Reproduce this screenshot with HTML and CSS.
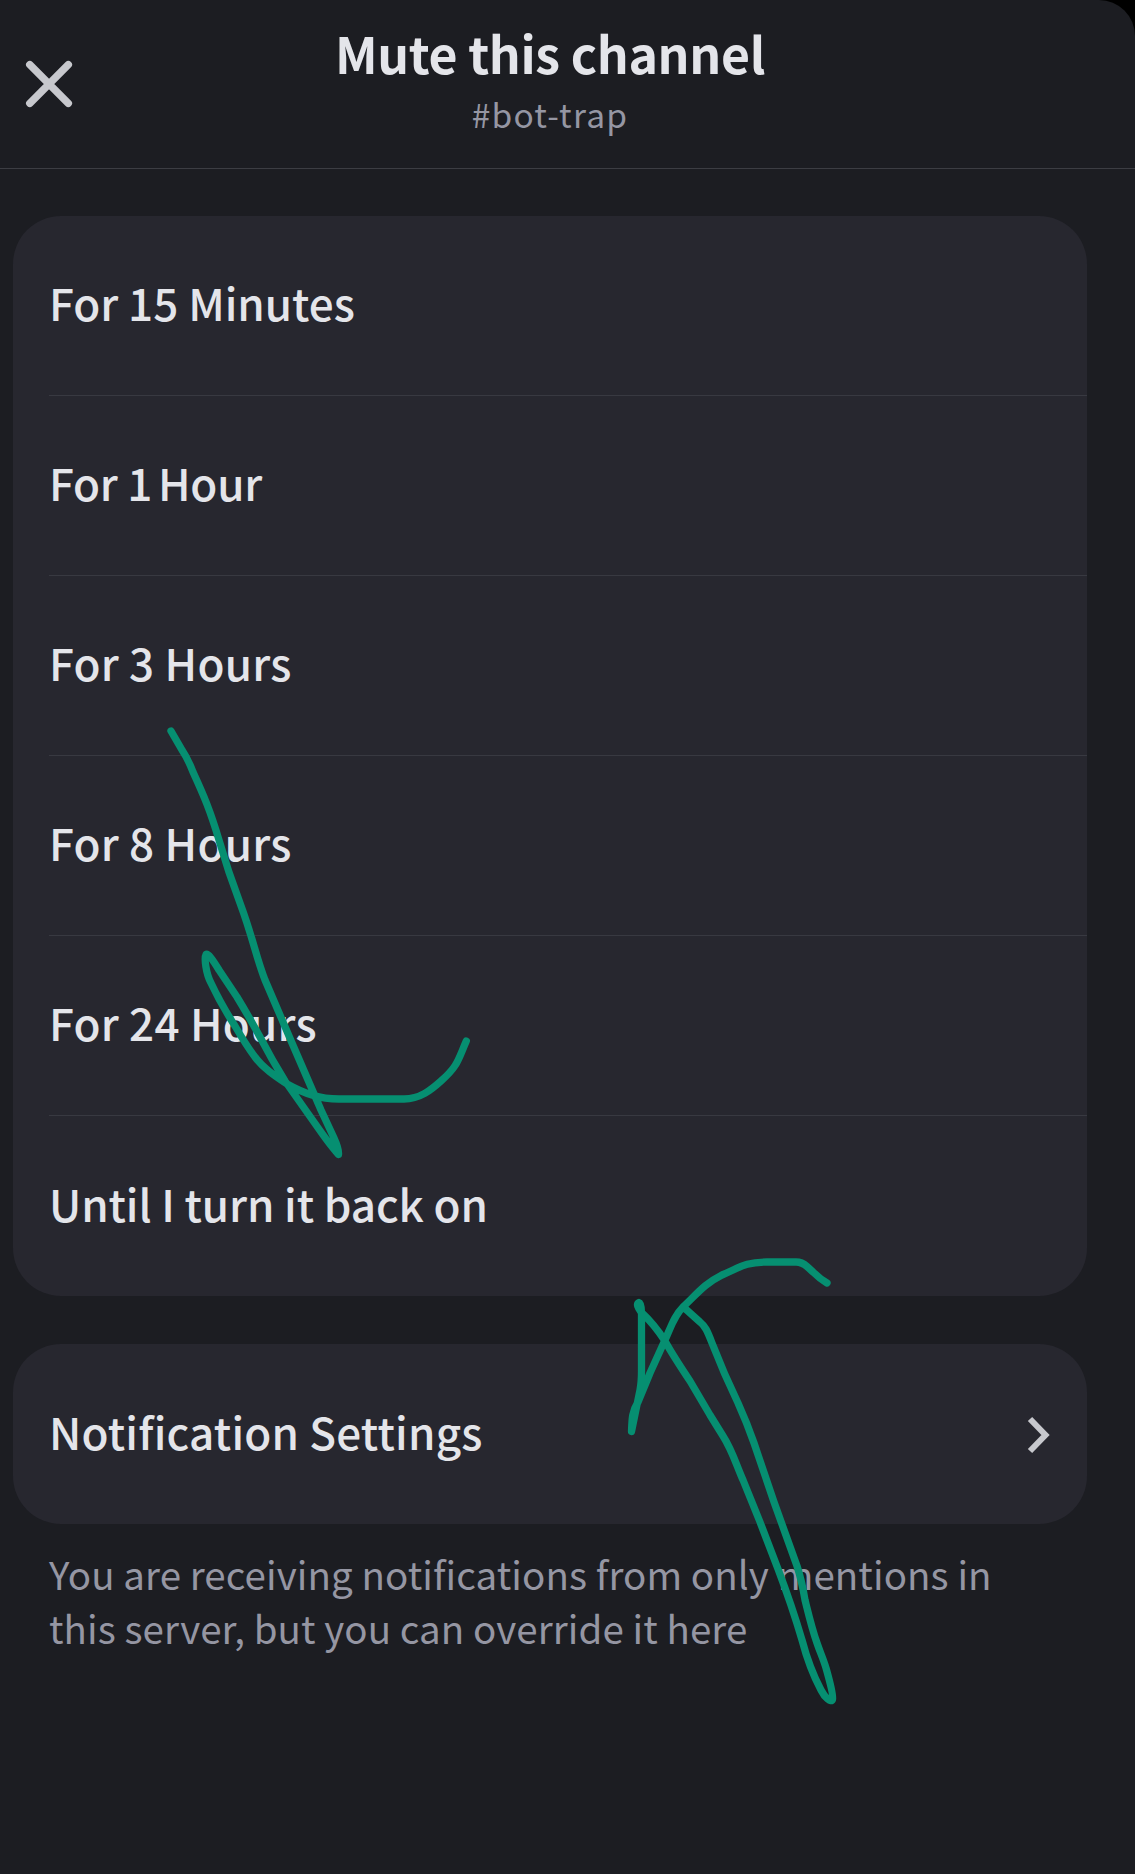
FILE: index.html
```html
<!DOCTYPE html>
<html lang="en">
<head>
<meta charset="utf-8">
<title>Mute this channel</title>
<link rel="stylesheet" href="styles.css">
</head>
<body>
<main class="sheet">
  <header class="header">
    <button class="close" aria-label="Close">
      <svg width="48" height="48" viewBox="0 0 48 48"><path d="M4.8 4.700 43.300 43.300M43.300 4.700 4.800 43.300"/></svg>
    </button>
    <div class="heading">
      <h1 class="title">Mute this channel</h1>
      <p class="subtitle">#bot-trap</p>
    </div>
  </header>

  <ul class="card">
    <li class="row minutes">For 15 Minutes</li>
    <li class="row hour"><span>For <span class="one">1 </span>Hour</span></li>
    <li class="row">For 3 Hours</li>
    <li class="row">For 8 Hours</li>
    <li class="row">For 24 Hours</li>
    <li class="row until">Until I turn it back on</li>
  </ul>

  <div class="card">
    <div class="row settings">
      <span>Notification Settings</span>
      <svg class="chevron" width="24" height="40" viewBox="0 0 24 40"><path d="M3 4 18.500 20 3 36"/></svg>
    </div>
  </div>
  <p class="caption">You are receiving notifications from only mentions in<br>this server, but you can override it here</p>

  <svg class="drawing" width="1135" height="1874" viewBox="0 0 1135 1874">
    <path d="M171 731 182 750Q188 759 193 772C204 796 210 810 219 840 225 861 232 882 240 903 253 938 256 957 265 980L292 1043 321 1110 334 1138Q339 1149 338.500 1154.500 330 1145 321 1132L285 1081Q272 1060 260 1037 248 1015 237 997L219 970C213 960 208 953 206 954.500 204 958 206 974 211 983 218 998 226 1012 235 1026 242 1038 248 1048 255 1057 263 1068 275 1076 287 1084 305 1094 320 1099 339 1099L404 1099C420 1099 431 1090 441 1081 458 1066 458 1060 466.300 1041"/>
    <path d="M827 1283 Q820 1279 813 1272L807 1266.500Q802 1262 796 1262L767 1262C745 1262 739 1268 722 1275 704 1284 697 1294 683 1307 674 1316 671 1327 665 1340L650 1373 638 1402C632 1412 632 1418 631.500 1431.500L640 1390Q641.500 1382 641.500 1371L641.500 1313Q641.500 1303 639 1302.500C636 1304 638 1308 641 1312Q654 1324 665 1341C672 1354 682 1369 690 1381L710 1415 723 1436C732 1450 736 1464 743 1480L760 1522 778 1569Q792 1606 802 1640C807 1659 813 1675 821 1690 825 1698 831 1703 832.500 1699.500 834 1696 829 1679 826 1668 823 1658 820 1652 817 1643 812 1629 808 1612 805 1600 803 1588 801 1578 797 1566L774 1502 754 1443Q747 1423 738 1403 724 1374 712 1343C707 1330 705 1326 700 1322L685 1308.500"/>
  </svg>
</main>
</body>
</html>
```
FILE: styles.css
```css
* {
  box-sizing: border-box;
  margin: 0;
  padding: 0;
}

body {
  background: #000;
  font-family: "Noto Sans CJK SC", "Noto Sans", sans-serif;
  color: #e4e5ea;
}

.sheet {
  position: relative;
  height: 1874px;
  background: #1c1d22;
  border-top-right-radius: 36px;
  overflow: hidden;
}

.header {
  display: grid;
  grid-template-columns: 100px 900px;
  height: 169px;
  border-bottom: 1px solid #3c3d43;
}

.close {
  align-self: start;
  width: 48px;
  height: 48px;
  margin: 60px 0 0 25px;
  border: 0;
  background: none;
}

.close svg {
  display: block;
}

.close path {
  fill: none;
  stroke: #c7c8cd;
  stroke-width: 7.5;
  stroke-linecap: round;
}

.heading {
  padding-top: 22px;
  text-align: center;
}

.title {
  font-size: 50px;
  font-weight: 700;
  line-height: 60px;
  letter-spacing: -0.35px;
}

.subtitle {
  margin-top: 11px;
  font-size: 33.5px;
  line-height: 42px;
  letter-spacing: 1.2px;
  color: #9596a3;
}

.card {
  width: 1074px;
  margin: 47px 0 0 13px;
  border-radius: 48px;
  background: #27272f;
  list-style: none;
}

.card + .card {
  margin-top: 48px;
}

.row {
  display: flex;
  align-items: center;
  height: 180px;
  margin-left: 36px;
  padding-bottom: 7px;
  font-size: 44px;
  font-weight: 500;
  letter-spacing: 0.25px;
  white-space: pre;
}

.row:not(:last-child) {
  border-bottom: 1px solid #383941;
}

.minutes {
  letter-spacing: 0;
}

.hour {
  letter-spacing: -0.2px;
}

.one {
  letter-spacing: -2.2px;
}

.until {
  letter-spacing: -0.1px;
}

.settings {
  justify-content: space-between;
  letter-spacing: 0.2px;
}

.chevron {
  margin: 8px 36px 0 0;
}

.chevron path {
  fill: none;
  stroke: #c7c8cd;
  stroke-width: 6;
}

.caption {
  margin: 22px 0 0 49px;
  font-size: 38.5px;
  line-height: 54px;
  letter-spacing: 0.08px;
  color: #9596a3;
}

/* Freehand strokes drawn over the whole sheet */
.drawing {
  position: absolute;
  inset: 0;
  pointer-events: none;
}

.drawing path {
  fill: none;
  stroke: #068f71;
  stroke-width: 7.3;
  stroke-linecap: round;
  stroke-linejoin: round;
}
```
